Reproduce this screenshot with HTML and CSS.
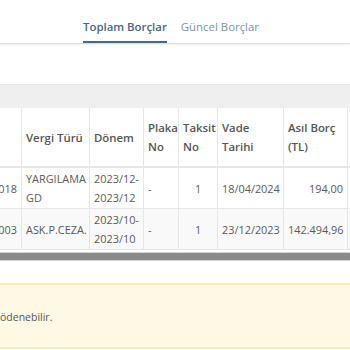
FILE: index.html
```html
<!DOCTYPE html>
<html lang="tr">
<head>
    <meta charset="UTF-8">
    <title>Borç Sorgulama</title>
    <link rel="stylesheet" href="styles.css">
</head>
<body>
    <div class="tabs">
        <a class="tab active" href="#">Toplam Borçlar</a>
        <a class="tab" href="#">Güncel Borçlar</a>
    </div>

    <div class="panel">
        <div class="panel-heading"></div>
        <div class="table-scroll">
            <table class="debts">
                <colgroup>
                    <col class="col-no">
                    <col class="col-type">
                    <col class="col-term">
                    <col class="col-plate">
                    <col class="col-inst">
                    <col class="col-due">
                    <col class="col-amount">
                    <col class="col-more">
                </colgroup>
                <thead>
                    <tr>
                        <th></th>
                        <th>Vergi Türü</th>
                        <th>Dönem</th>
                        <th>Plaka No</th>
                        <th>Taksit No</th>
                        <th>Vade Tarihi</th>
                        <th>Asıl Borç (TL)</th>
                        <th></th>
                    </tr>
                </thead>
                <tbody>
                    <tr>
                        <td class="num">2024000018</td>
                        <td>YARGILAMA GD</td>
                        <td>2023/12-<br>2023/12</td>
                        <td>-</td>
                        <td class="center">1</td>
                        <td>18/04/2024</td>
                        <td class="num">194,00</td>
                        <td></td>
                    </tr>
                    <tr>
                        <td class="num">2023000003</td>
                        <td>ASK.P.CEZA.</td>
                        <td>2023/10-<br>2023/10</td>
                        <td>-</td>
                        <td class="center">1</td>
                        <td>23/12/2023</td>
                        <td class="num">142.494,96</td>
                        <td></td>
                    </tr>
                </tbody>
            </table>
        </div>
        <div class="scrollbar"><div class="scrollbar-thumb"></div></div>
    </div>

    <div class="alert">
        <p>ödenebilir.</p>
    </div>
</body>
</html>
```

FILE: styles.css
```css
* {
    margin: 0;
    padding: 0;
    box-sizing: border-box;
}

body {
    font-family: 'Open Sans', 'Liberation Sans', sans-serif;
    background: #fff;
    color: #555;
    width: 350px;
    height: 350px;
    overflow: hidden;
}

/* tabs */
.tabs {
    display: flex;
    gap: 14px;
    padding: 19px 0 0 83px;
    border-bottom: 1px solid #dedede;
    box-shadow: 0 1px 2px rgba(0, 0, 0, 0.07);
}

.tab {
    font-size: 11.4px;
    line-height: 16px;
    padding-bottom: 6px;
    border-bottom: 2px solid transparent;
    color: #7d93ab;
    text-decoration: none;
}

.tab.active {
    color: #4b6787;
    font-weight: 600;
    border-bottom-color: #4b6787;
}

/* table panel */
.panel {
    margin-top: 40px;
}

.panel-heading {
    height: 24px;
    background: #efefef;
    border-top: 1px solid #e2e2e2;
}

.table-scroll {
    overflow: hidden;
}

.debts {
    border-collapse: collapse;
    table-layout: fixed;
    width: 457px;
    margin-left: -70px;
    font-size: 10.9px;
    line-height: 19px;
}

.debts th,
.debts td {
    border: 1px solid #e6e6e6;
    padding: 1px 4px;
    text-align: left;
    vertical-align: middle;
}

.debts th {
    font-size: 11.4px;
    font-weight: 600;
    color: #555;
    padding: 10px 4px;
    border-top: none;
    border-bottom: 2px solid #e6e6e6;
}

.debts td {
    color: #5a5a5a;
}

.debts tbody tr:nth-child(2) td {
    background: #f9f9f9;
}

.debts .num {
    text-align: right;
    white-space: nowrap;
    overflow: hidden;
}

.debts .center {
    text-align: center;
}

.col-no { width: 91px; }
.col-type { width: 68px; }
.col-term { width: 54px; }
.col-plate { width: 35px; }
.col-inst { width: 39px; }
.col-due { width: 66px; }
.col-amount { width: 64px; }
.col-more { width: 40px; }

.scrollbar {
    margin-top: 2px;
    height: 9px;
    background: #d4d4d4;
    padding: 1px 0;
}

.scrollbar-thumb {
    height: 7px;
    background: #8a8a8a;
}

/* info box */
.alert {
    margin-top: 22px;
    height: 66px;
    background: #fdf9e5;
    border-top: 2px solid #f7efbb;
    border-bottom: 2px solid #f7efbb;
    display: flex;
    align-items: center;
}

.alert p {
    font-size: 10.5px;
    color: #555;
    padding-top: 2px;
}
```
